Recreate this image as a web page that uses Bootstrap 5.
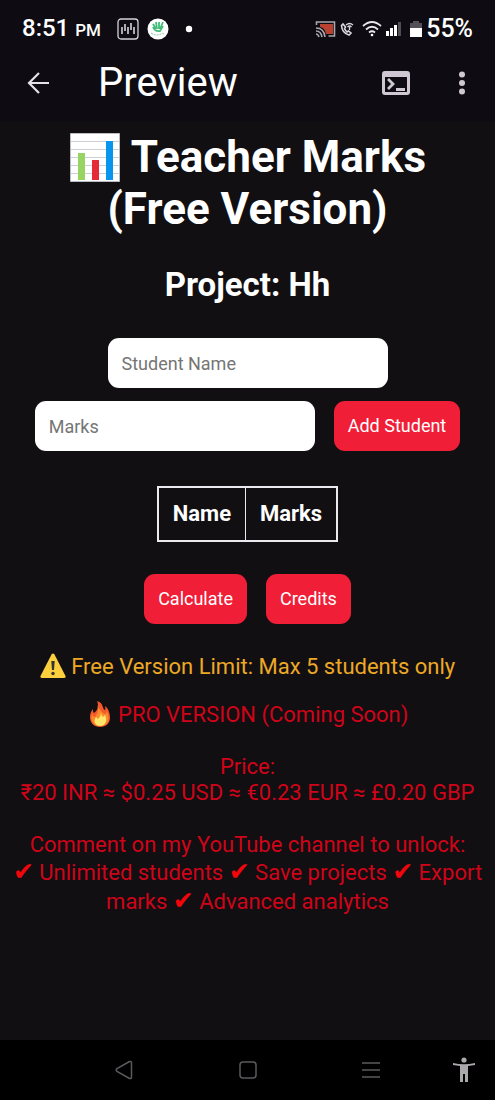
<!DOCTYPE html>
<html lang="en">
<head>
<meta charset="utf-8">
<meta name="viewport" content="width=device-width, initial-scale=1">
<title>Teacher Marks</title>
<link href="https://cdn.jsdelivr.net/npm/bootstrap@5.3.0/dist/css/bootstrap.min.css" rel="stylesheet">
<style>
  body { background: #110f12; color: #fff; font: 22px/26px Roboto, "Noto Sans", "DejaVu Sans", sans-serif; }
  svg { display: block; flex: none; }
  .top-area { background: #0e0c12; }
  .status-bar { height: 54px; padding: 4px 22px 0; font-weight: 500; }
  .clock { font-size: 24px; }
  .clock small { font-size: 17px; }
  .battery-level { font-size: 25px; }
  .app-bar { height: 68px; padding: 0 15px 10px 20px; }
  .app-title { font-size: 40px; line-height: 48px; font-weight: 400; margin-left: 42px; }
  .icon-btn { padding: 6px; border: 0; background: none; }
  .icon-btn + .icon-btn { margin-left: 28px; }
  .page-body { padding: 9px 11px 24px; }
  .page-title { font-size: 44px; line-height: 52px; font-weight: 700; margin-bottom: 31px; }
  .project-name { font-size: 33px; line-height: 38px; font-weight: 700; margin-bottom: 34px; }
  .emoji { display: inline-block; }
  .emoji-title { width: 52px; height: 52px; vertical-align: -11px; }
  .emoji-text { width: 26px; height: 26px; vertical-align: -5px; }
  .tick-mark { color: #f2050b; font-family: "DejaVu Sans", sans-serif; font-size: 25px; line-height: 1; }
  .field { width: 280px; height: 50px; padding: 0 14px; border: 0; border-radius: 11px; background: #fff; font-size: 18px; }
  .field::placeholder { color: #757575; opacity: 1; }
  .entry-form { row-gap: 13px; column-gap: 19px; }
  .action { --bs-btn-color: #fff; --bs-btn-bg: #f01e37; --bs-btn-hover-color: #fff; --bs-btn-hover-bg: #d5182f; --bs-btn-border-width: 0;
    height: 50px; padding: 0 14px; border-radius: 11px; font-size: 18px; line-height: 22px; }
  .marks-table { margin: 35px auto 32px; border: 2px solid #eceaf0; border-collapse: collapse; }
  .marks-table th { padding: 13px 14px; line-height: 26px; }
  .marks-table th + th { border-left: 1px solid #eceaf0; }
  .limit-note { color: #eda826; margin: 29px 0 21px; }
  .pro-note { color: #cf0419; }
  .pro-note p { margin: 26px 0 0; }
  .pro-note .perks { margin: 0; line-height: 29px; }
  .system-nav { height: 60px; background: #000; display: grid; grid-template-columns: 1fr 2fr 2fr 2fr 1fr; place-items: center; }
  .system-nav button { padding: 0; }
  .system-nav button:first-child { grid-column: 2; }
</style>
</head>
<body class="d-flex flex-column min-vh-100">
<header class="top-area">
  <div class="status-bar d-flex align-items-center">
    <span class="clock">8:51 <small>PM</small></span>
    <svg class="ms-3" width="22" height="22" viewBox="0 0 22 22" fill="none" stroke="#d5d3d9"><rect x="1" y="1" width="20" height="20" rx="3" stroke-width="1.3"/><path d="M5 9v7M8 6v7M11 9v7M14 5v7M17 9v7" stroke-width="1.6"/></svg>
    <svg class="ms-2" width="22" height="22" viewBox="0 0 22 22"><circle cx="11" cy="11" r="10.5" fill="#fff"/><path d="M6 6l3 5M9 4l1 7M12 4v7M16 4l-3 7M6 9q2 5 7 4l3-5" stroke="#42bd78" stroke-width="1.8" fill="none"/><path d="M4 15q6 4 12 0l1 2" stroke="#7fcaa0" stroke-dasharray="2 1" fill="none"/></svg>
    <svg class="ms-3" width="8" height="8" viewBox="0 0 8 8"><circle cx="4" cy="4" r="3.2" fill="#fff"/></svg>
    <div class="ms-auto d-flex align-items-center gap-1">
      <svg width="21" height="18" viewBox="0 0 21 18" fill="none" stroke="#aaa8ae" stroke-width="1.6"><path d="M5 4h13v10h-7Q10 8 5 7z" fill="#b9412f" stroke="none"/><path d="M1.5 5V2h18v14h-6M1 8q8 0 9 9M1 11q5 0 6 6M1 14q2 0 3 3"/></svg>
      <svg width="14" height="14" viewBox="0 0 14 14" fill="none" stroke="#dcdade"><path d="M3 2L1.500 3.500Q2 11 9 13l2-2-2.500-2-1.500 1Q5 8 4.500 6.500L5.500 5z" stroke-width="1.600"/><path d="M6 3q3.500-3 7 0M7.500 5q2-2 4 0M9.500 5v3" stroke-width="1.300"/></svg>
      <svg class="ms-1" width="20" height="16" viewBox="0 0 20 16" fill="none" stroke="#e9e7ec" stroke-width="1.7"><path d="M1 5q9-8 18 0M4 8.500q6-5.500 12 0M7 11.500q3-2.500 6 0"/><circle cx="10" cy="14" r="1.300" fill="#fff" stroke="none"/></svg>
      <svg width="16" height="16" viewBox="0 0 16 16"><path d="M0 10h3v5H0zM4 7h3v8H4zM8 4h3v11H8z" fill="#fff"/><path d="M12 1h3v14h-3z" fill="#504e54"/></svg>
      <svg class="ms-1" width="12" height="18" viewBox="0 0 12 18"><path d="M3 1h6v2h3v6H0V3h3z" fill="#535157"/><path d="M0 8h12v9H0z" fill="#fff"/></svg>
      <span class="battery-level">55%</span>
    </div>
  </div>
  <nav class="app-bar d-flex align-items-center">
    <button class="icon-btn" type="button" aria-label="Back"><svg width="24" height="24" viewBox="0 0 24 24" fill="none" stroke="#e6e1e8" stroke-width="2.200"><path d="M23 12H3M13 2L3 12l10 10"/></svg></button>
    <span class="app-title">Preview</span>
    <button class="icon-btn ms-auto" type="button" aria-label="Console"><svg width="28" height="24" viewBox="0 0 28 24"><path fill="#cfc8d2" fill-rule="evenodd" d="M3 0h22q3 0 3 3v18q0 3-3 3H3q-3 0-3-3V3q0-3 3-3zM3 6v15h22V6z"/><path d="M6 8l5 5-5 5M14 18.500h9" fill="none" stroke="#cfc8d2" stroke-width="2.800"/></svg></button>
    <button class="icon-btn" type="button" aria-label="More options"><svg width="24" height="24" viewBox="0 0 24 24" fill="#cfc8d2"><circle cx="12" cy="3.500" r="3"/><circle cx="12" cy="12" r="3"/><circle cx="12" cy="20.500" r="3"/></svg></button>
  </nav>
</header>

<main class="page-body flex-grow-1 text-center">
  <h1 class="page-title"><svg class="emoji emoji-title" viewBox="0 0 52 52" role="img" aria-label="Bar chart"><path fill="#fff" stroke="#b9bdc3" d="M1.500 2.500h49v48h-49z"/><path d="M2 10.500h48M2 18.500h48M2 26.500h48M2 34.500h48M2 42.500h48" stroke="#ccd0d5"/><path fill="#97d461" d="M9 22h7v27H9z"/><path fill="#e72a38" d="M23 29h7v20h-7z"/><path fill="#0795ed" d="M37 10h7v39h-7z"/></svg> Teacher Marks<br>(Free Version)</h1>
  <h2 class="project-name">Project: Hh</h2>

  <form class="entry-form d-flex flex-wrap justify-content-center">
    <input class="field" type="text" placeholder="Student Name" aria-label="Student Name">
    <div class="w-100 d-flex justify-content-center entry-form">
      <input class="field" type="text" placeholder="Marks" aria-label="Marks">
      <button class="btn action" type="button">Add Student</button>
    </div>
  </form>

  <table class="marks-table">
    <thead><tr><th scope="col">Name</th><th scope="col">Marks</th></tr></thead>
  </table>

  <div class="d-flex justify-content-center entry-form">
    <button class="btn action" type="button">Calculate</button>
    <button class="btn action" type="button">Credits</button>
  </div>

  <p class="limit-note"><svg class="emoji emoji-text" viewBox="0 0 26 26" role="img" aria-label="Warning"><path d="M11.500 1.500q1.500-2 3 0L25.500 23q.5 2-1.500 2H2q-2 0-1.500-2z" fill="#fbcf3d"/><path d="M11.300 8h3.400l-.7 9h-2z" fill="#35352f"/><circle cx="13" cy="20.500" r="1.700" fill="#35352f"/></svg> Free Version Limit: Max 5 students only</p>

  <div class="pro-note">
    <svg class="emoji emoji-text" viewBox="0 0 26 26" role="img" aria-label="Fire"><path d="M10 0c7 2 5 8 8 9 1-1 0-3 0-4 4 3 5 8 5 12 0 5-4 9-10 9S3 22 3 16c0-3 1-6 3-8 0 2 0 3 1 4 4-3 5-7 3-12z" fill="#f4592a"/><path d="M10 4c3 5 5 8 8 9 2-1 2-2 2-3 4 10 0 15-7 15S3 19 5 13c1 1 1 3 3 3 3-4 4-7 2-12z" fill="#fb8a2d"/><path d="M14 11c0 3 1 4 2 5l2-2c3 6 0 11-5 11s-7-5-4-9l2 2c2-2 3-4 3-7z" fill="#fee66b"/></svg>
    PRO VERSION (Coming Soon)
    <p>Price:<br>₹20 INR ≈ $0.25 USD ≈ €0.23 EUR ≈ £0.20 GBP</p>
    <p>Comment on my YouTube channel to unlock:</p>
    <p class="perks"><span class="tick-mark">✔</span> Unlimited students <span class="tick-mark">✔</span> Save projects <span class="tick-mark">✔</span> Export marks <span class="tick-mark">✔</span> Advanced analytics</p>
  </div>
</main>

<footer class="system-nav">
  <button class="btn border-0" type="button" aria-label="Back"><svg width="18" height="20" viewBox="0 0 18 20" fill="none" stroke="#5c5a5e" stroke-width="1.500"><path d="M14.500 1.500L2 8.500q-1.500 1.500 0 3l12.500 7q2 .5 2-1.500V3q0-2-2-1.500z"/></svg></button>
  <button class="btn border-0" type="button" aria-label="Home"><svg width="18" height="18" viewBox="0 0 18 18" fill="none" stroke="#5c5a5e" stroke-width="1.500"><rect x="1" y="1" width="16" height="16" rx="3"/></svg></button>
  <button class="btn border-0" type="button" aria-label="Recent apps"><svg width="18" height="18" viewBox="0 0 18 18" stroke="#5c5a5e" stroke-width="1.500"><path d="M0 2h18M0 9h18M0 16h18"/></svg></button>
  <button class="btn border-0" type="button" aria-label="Accessibility"><svg width="22" height="26" viewBox="0 0 22 26" fill="#aaa8aa"><circle cx="11" cy="3" r="2.600"/><path d="M0 6q11 2.500 22 0v2l-7 1v16h-3v-8h-2v8H7V9L0 8z"/></svg></button>
</footer>
<script src="https://cdn.jsdelivr.net/npm/bootstrap@5.3.0/dist/js/bootstrap.bundle.min.js"></script>
</body>
</html>
